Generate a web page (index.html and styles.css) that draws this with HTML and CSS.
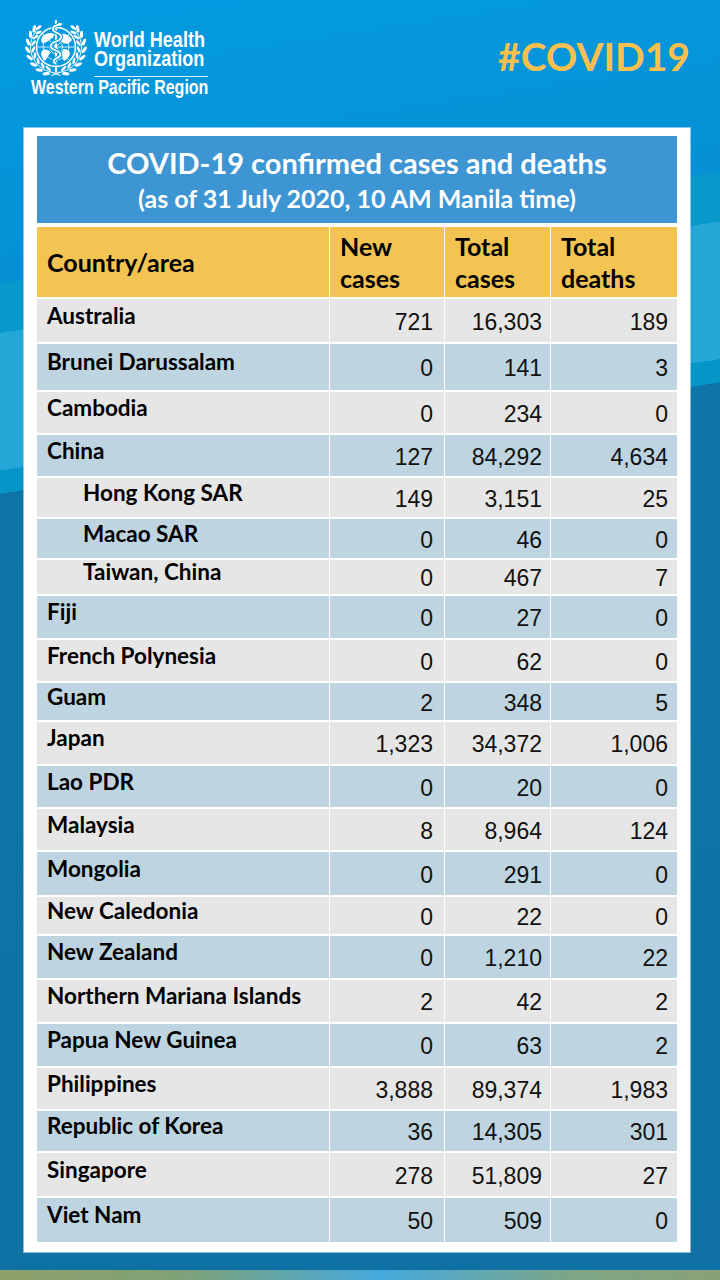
FILE: index.html
```html
<!DOCTYPE html>
<html lang="en">
<head>
<meta charset="utf-8">
<title>COVID-19 confirmed cases and deaths</title>
<link rel="stylesheet" href="styles.css">
</head>
<body>
<header class="top">
  <div class="logo">
    <div class="logo-row">
      <svg class="emblem" viewBox="0 0 68 60" width="68" height="60" aria-hidden="true">
        <defs>
          <g id="lf" fill="#fff">
            <ellipse cx="5.6" cy="30" rx="1.6" ry="3.8" transform="rotate(-28 5.6 30)"/>
            <ellipse cx="11.3" cy="30" rx="1.35" ry="3.3" transform="rotate(26 11.3 30)"/>
          </g>
          <g id="wr">
            <path d="M29.6 55.1 A25.5 25.5 0 0 1 14.5 13.6" fill="none" stroke="#fff" stroke-width="1"/>
            <use href="#lf" transform="rotate(-70 34 30)"/>
            <use href="#lf" transform="rotate(-54 34 30)"/>
            <use href="#lf" transform="rotate(-38 34 30)"/>
            <use href="#lf" transform="rotate(-22 34 30)"/>
            <use href="#lf" transform="rotate(-6 34 30)"/>
            <use href="#lf" transform="rotate(10 34 30)"/>
            <use href="#lf" transform="rotate(26 34 30)"/>
            <use href="#lf" transform="rotate(40 34 30)"/>
            <ellipse cx="16.6" cy="10.6" rx="1.4" ry="3.4" fill="#fff" transform="rotate(52 16.6 10.6)"/>
          </g>
        </defs>
        <use href="#wr"/>
        <use href="#wr" transform="matrix(-1 0 0 1 68 0)"/>
        <path d="M29.4 55 L38.6 58.6 M38.6 55 L29.4 58.6" stroke="#fff" stroke-width="1.1"/>
        <g fill="none" stroke="#fff">
          <circle cx="34" cy="30" r="19.5" stroke-width="1.5"/>
          <circle cx="34" cy="30" r="13" stroke-width="0.8"/>
          <circle cx="34" cy="30" r="6.5" stroke-width="0.8"/>
          <path d="M14.5 30H53.5M34 10.5V49.5M20.2 16.2L47.8 43.8M47.8 16.2L20.2 43.8" stroke-width="0.8"/>
        </g>
        <g fill="#fff">
          <path d="M20 20c3-4 9-5 12-3l-1 4c-2 0-3 2-5 3c-2 1-4 3-6 2c-1-2-1-4 0-6z"/>
          <path d="M38 17c5-1 10 1 12 6c-1 2-3 2-4 4c-2-1-4 0-5-1c-1-2-4-3-3-9z"/>
          <path d="M42 32c3 0 6 2 6 5c-1 3-3 5-6 7c-1-2-2-4-2-7c0-2 0-4 2-5z"/>
          <path d="M21 33c3-1 6 0 7 2c-1 3-3 6-5 9c-2-2-4-5-4-8c0-1 1-2 2-3z"/>
          <path d="M31 44c2 0 4 1 4 2.5c-1 1-3 1-4.5 0z"/>
        </g>
        <rect x="32.9" y="3" width="2.2" height="53" rx="1" fill="#fff"/>
        <path class="snake-bg" d="M37.5 7.5C30 9 29 13 34 15.5C41 18 41 22 34 24.5C27 27 27 31 34 33.5C40 36 40 39 34 41.5C31 43 31 45 33.5 46.5"/>
        <path class="snake" d="M37.5 7.5C30 9 29 13 34 15.5C41 18 41 22 34 24.5C27 27 27 31 34 33.5C40 36 40 39 34 41.5C31 43 31 45 33.5 46.5"/>
        <ellipse cx="38" cy="7.3" rx="2.1" ry="1.4" fill="#fff"/>
      </svg>
      <div class="who-name">
        <div class="wn-text">
          <span>World Health</span>
          <span>Organization</span>
        </div>
      </div>
    </div>
    <div class="region"><span class="region-text">Western Pacific Region</span></div>
  </div>
  <div class="tag">#COVID19</div>
</header>

<main class="card">
  <div class="title">
    <div class="t1">COVID-19 confirmed cases and deaths</div>
    <div class="t2">(as of 31 July 2020, 10 AM Manila time)</div>
  </div>

  <div class="thead">
    <div class="th th-country">Country/area</div>
    <div class="th">New<br>cases</div>
    <div class="th">Total<br>cases</div>
    <div class="th">Total<br>deaths</div>
  </div>

  <div class="tbody">
    <div class="row"><div class="c name">Australia</div><div class="c n n1">721</div><div class="c n n2">16,303</div><div class="c n n3">189</div></div>
    <div class="row"><div class="c name">Brunei Darussalam</div><div class="c n n1">0</div><div class="c n n2">141</div><div class="c n n3">3</div></div>
    <div class="row"><div class="c name">Cambodia</div><div class="c n n1">0</div><div class="c n n2">234</div><div class="c n n3">0</div></div>
    <div class="row"><div class="c name">China</div><div class="c n n1">127</div><div class="c n n2">84,292</div><div class="c n n3">4,634</div></div>
    <div class="row"><div class="c name sub">Hong Kong SAR</div><div class="c n n1">149</div><div class="c n n2">3,151</div><div class="c n n3">25</div></div>
    <div class="row"><div class="c name sub">Macao SAR</div><div class="c n n1">0</div><div class="c n n2">46</div><div class="c n n3">0</div></div>
    <div class="row"><div class="c name sub">Taiwan, China</div><div class="c n n1">0</div><div class="c n n2">467</div><div class="c n n3">7</div></div>
    <div class="row"><div class="c name">Fiji</div><div class="c n n1">0</div><div class="c n n2">27</div><div class="c n n3">0</div></div>
    <div class="row"><div class="c name">French Polynesia</div><div class="c n n1">0</div><div class="c n n2">62</div><div class="c n n3">0</div></div>
    <div class="row"><div class="c name">Guam</div><div class="c n n1">2</div><div class="c n n2">348</div><div class="c n n3">5</div></div>
    <div class="row"><div class="c name">Japan</div><div class="c n n1">1,323</div><div class="c n n2">34,372</div><div class="c n n3">1,006</div></div>
    <div class="row"><div class="c name">Lao PDR</div><div class="c n n1">0</div><div class="c n n2">20</div><div class="c n n3">0</div></div>
    <div class="row"><div class="c name">Malaysia</div><div class="c n n1">8</div><div class="c n n2">8,964</div><div class="c n n3">124</div></div>
    <div class="row"><div class="c name">Mongolia</div><div class="c n n1">0</div><div class="c n n2">291</div><div class="c n n3">0</div></div>
    <div class="row"><div class="c name">New Caledonia</div><div class="c n n1">0</div><div class="c n n2">22</div><div class="c n n3">0</div></div>
    <div class="row"><div class="c name">New Zealand</div><div class="c n n1">0</div><div class="c n n2">1,210</div><div class="c n n3">22</div></div>
    <div class="row"><div class="c name">Northern Mariana Islands</div><div class="c n n1">2</div><div class="c n n2">42</div><div class="c n n3">2</div></div>
    <div class="row"><div class="c name">Papua New Guinea</div><div class="c n n1">0</div><div class="c n n2">63</div><div class="c n n3">2</div></div>
    <div class="row"><div class="c name">Philippines</div><div class="c n n1">3,888</div><div class="c n n2">89,374</div><div class="c n n3">1,983</div></div>
    <div class="row"><div class="c name">Republic of Korea</div><div class="c n n1">36</div><div class="c n n2">14,305</div><div class="c n n3">301</div></div>
    <div class="row"><div class="c name">Singapore</div><div class="c n n1">278</div><div class="c n n2">51,809</div><div class="c n n3">27</div></div>
    <div class="row"><div class="c name">Viet Nam</div><div class="c n n1">50</div><div class="c n n2">509</div><div class="c n n3">0</div></div>
  </div>
</main>

<div class="strip"></div>
</body>
</html>
```

FILE: styles.css
```css
html, body {
  margin: 0;
  padding: 0;
}

body {
  width: 720px;
  height: 1280px;
  overflow: hidden;
  font-family: Lato, "Liberation Sans", sans-serif;
  background: linear-gradient(171.2deg,
    #039be2 0px,
    #0790d3 280px,
    #0898c9 280px,
    #0898c9 329px,
    #25a6d6 329px,
    #25a6d6 465px,
    #0695c7 465px,
    #0695c7 488px,
    #0f75a8 488px,
    #0f71a4 100%);
}

/* ---------- header ---------- */
.top {
  height: 128px;
  box-sizing: border-box;
  padding: 0 30px 0 22px;
  display: flex;
  justify-content: space-between;
  align-items: flex-start;
}

.logo {
  width: 186px;
  padding-top: 17px;
  display: flex;
  flex-direction: column;
}

.logo-row {
  display: flex;
  align-items: flex-start;
}

.emblem {
  display: block;
  flex: none;
}

.snake-bg {
  fill: none;
  stroke: #039be2;
  stroke-width: 3.6;
  stroke-linecap: round;
}

.snake {
  fill: none;
  stroke: #fff;
  stroke-width: 1.8;
  stroke-linecap: round;
}

.who-name {
  margin: 13px 0 0 4px;
  width: 114px;
  flex: none;
  padding-bottom: 8px;
  border-bottom: 1px solid rgba(255, 255, 255, 0.85);
}

.wn-text {
  width: 139px;
  display: flex;
  flex-direction: column;
  transform: scaleX(0.82);
  transform-origin: left top;
  font-family: "Liberation Sans", Arial, sans-serif;
  font-weight: 700;
  font-size: 22px;
  line-height: 19px;
  color: #fff;
  white-space: nowrap;
}

.region {
  margin-top: 1px;
  display: flex;
  justify-content: flex-end;
}

.region-text {
  flex: none;
  transform: scaleX(0.82);
  transform-origin: right top;
  font-family: "Liberation Sans", Arial, sans-serif;
  font-weight: 700;
  font-size: 19.5px;
  line-height: 19px;
  color: #fff;
  white-space: nowrap;
}

.tag {
  margin-top: 36px;
  font-family: Lato, sans-serif;
  font-weight: 700;
  font-size: 39px;
  line-height: 40px;
  color: #fdc04e;
}

/* ---------- card ---------- */
.card {
  margin-left: 24px;
  width: 666px;
  height: 1124px;
  box-sizing: border-box;
  padding: 8px 13px 10px;
  background: #fff;
  box-shadow: 0 0 0 1px rgba(220, 238, 250, 0.6);
  display: flex;
  flex-direction: column;
}

.title {
  height: 87px;
  box-sizing: border-box;
  padding-top: 9px;
  background: #3d95d3;
  color: #fff;
  text-align: center;
  font-weight: 700;
}

.t1 {
  font-size: 29px;
  line-height: 36px;
}

.t2 {
  font-size: 25px;
  line-height: 34px;
}

.thead,
.tbody {
  display: grid;
  grid-template-columns: 292px 114px 105px 126px;
  column-gap: 1px;
}

.thead {
  margin-top: 4px;
  height: 70px;
}

.th {
  background: #f3c451;
  color: #000;
  font-weight: 700;
  font-size: 25px;
  line-height: 32px;
  padding: 3px 0 0 10px;
  box-sizing: border-box;
}

.th-country {
  padding-top: 0;
  display: flex;
  align-items: center;
}

.tbody {
  margin-top: 2px;
  row-gap: 2px;
  grid-template-rows: 43px 46px 41px 41px 39px 39px 34px 42px 41px 37px 42px 41px 41px 43px 37px 42px 42px 42px 41px 40px 43px 44px;
}

.row {
  display: contents;
}

.c {
  display: flex;
  align-items: center;
  box-sizing: border-box;
  color: #000;
}

.row:nth-child(odd) > .c {
  background: #e6e6e6;
}

.row:nth-child(even) > .c {
  background: #bed5e1;
}

.name {
  font-weight: 700;
  font-size: 22.5px;
  line-height: 26px;
  padding: 0 0 10px 10px;
  white-space: nowrap;
}

.name.sub {
  padding-left: 46px;
}

.n {
  justify-content: flex-end;
  font-family: "Liberation Sans", Arial, sans-serif;
  font-size: 23px;
  line-height: 26px;
  padding-top: 2px;
  color: #111;
}

.n1 { padding-right: 11px; }
.n2 { padding-right: 8px; }
.n3 { padding-right: 9px; }

/* ---------- bottom strip ---------- */
.strip {
  margin-top: 18px;
  height: 10px;
  background: linear-gradient(90deg, #8e9f69 0%, #80a278 25%, #46aadd 53%, #7ea585 80%, #8aa177 100%);
}
```
